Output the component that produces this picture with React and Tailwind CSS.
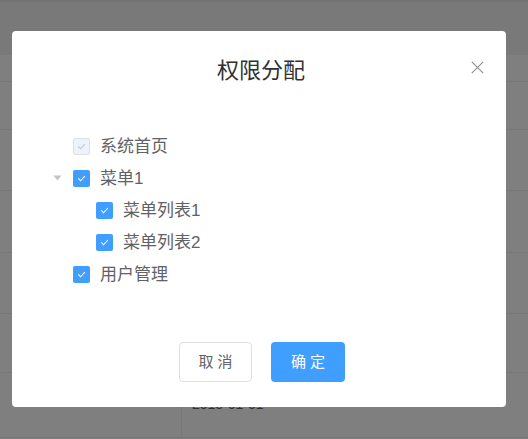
import React from "react";

const FONT = { fontFamily: '"Liberation Sans", "Noto Sans CJK SC", sans-serif' };

function Checkbox({ disabled }) {
  if (disabled) {
    return (
      <span className="flex h-[17px] w-[17px] shrink-0 items-center justify-center rounded-[2px] border border-[#dcdfe6] bg-[#edf2fc]">
        <svg width="11" height="11" viewBox="0 0 11 11">
          <path d="M2.3 5.4 L4.6 7.8 L8.9 3" fill="none" stroke="#c0c4cc" strokeWidth="1.1" />
        </svg>
      </span>
    );
  }
  return (
    <span className="flex h-[17px] w-[17px] shrink-0 items-center justify-center rounded-[2px] bg-[#409eff]">
      <svg width="11" height="11" viewBox="0 0 11 11">
        <path d="M2.3 5.4 L4.6 7.8 L8.9 3" fill="none" stroke="#ffffff" strokeWidth="1.1" />
      </svg>
    </span>
  );
}

function Row({ label, level = 0, caret = false, disabled = false }) {
  return (
    <div className={`flex h-[32px] items-center ${level === 1 ? "pl-[23px]" : ""}`}>
      <span className="flex w-[20px] justify-center">
        {caret && (
          <svg width="9" height="6" viewBox="0 0 9 6">
            <path d="M0.5 0.5 L8.5 0.5 L4.5 5.5 Z" fill="#c0c4cc" />
          </svg>
        )}
      </span>
      <span className="ml-[6px]">
        <Checkbox disabled={disabled} />
      </span>
      <span className="ml-[10px] text-[17px] leading-none text-[#606266]">{label}</span>
    </div>
  );
}

export default function App() {
  return (
    <div className="relative h-[439px] w-[528px] overflow-hidden bg-white" style={FONT}>
      {/* background table */}
      <div className="flex flex-col">
        <div className="h-[2px] bg-[#e6e6e6]" />
        <div className="h-[53px] bg-[#f3f3f3]" />
        <div className="h-[27px] border-b border-[#ebeef5]" />
        <div className="h-[48px] border-b border-[#ebeef5]" />
        <div className="h-[61px] border-b border-[#ebeef5]" />
        <div className="h-[62px] border-b border-[#ebeef5]" />
        <div className="h-[61px] border-b border-[#ebeef5]" />
        <div className="h-[59px] border-b border-[#ebeef5]" />
        <div className="flex h-[65px] border-b border-[#ebeef5]">
          <div className="w-[182px] border-r border-[#ebeef5]" />
          <div className="flex items-center pl-[10px] pb-[2px] text-[14px] text-[#606266]">2018-01-01</div>
        </div>
      </div>

      {/* overlay */}
      <div className="absolute inset-0 bg-black/50" />

      {/* dialog */}
      <div className="absolute left-[12px] top-[31px] flex h-[376px] w-[494px] flex-col rounded-[4px] bg-white">
        <div className="relative pt-[24px]">
          <div className="pl-[4px] text-center text-[22px] leading-[32px] text-[#303133]">权限分配</div>
          <svg className="absolute right-[22px] top-[30px]" width="13" height="13" viewBox="0 0 13 13">
            <path d="M0.8 0.8 L12.2 12.2 M12.2 0.8 L0.8 12.2" stroke="#909399" strokeWidth="1.2" />
          </svg>
        </div>
        <div className="pl-[35px] pt-[43px]">
          <Row label="系统首页" disabled />
          <Row label="菜单1" caret />
          <Row label="菜单列表1" level={1} />
          <Row label="菜单列表2" level={1} />
          <Row label="用户管理" />
        </div>
        <div className="mt-auto flex justify-center gap-[19px] pb-[25px] pl-[6px]">
          <button className="flex h-[40px] w-[73px] items-center justify-center rounded-[4px] border border-[#dcdfe6] bg-white text-[15px] text-[#606266]">
            取 消
          </button>
          <button className="flex h-[40px] w-[74px] items-center justify-center rounded-[4px] bg-[#409eff] text-[15px] text-white">
            确 定
          </button>
        </div>
      </div>
    </div>
  );
}
